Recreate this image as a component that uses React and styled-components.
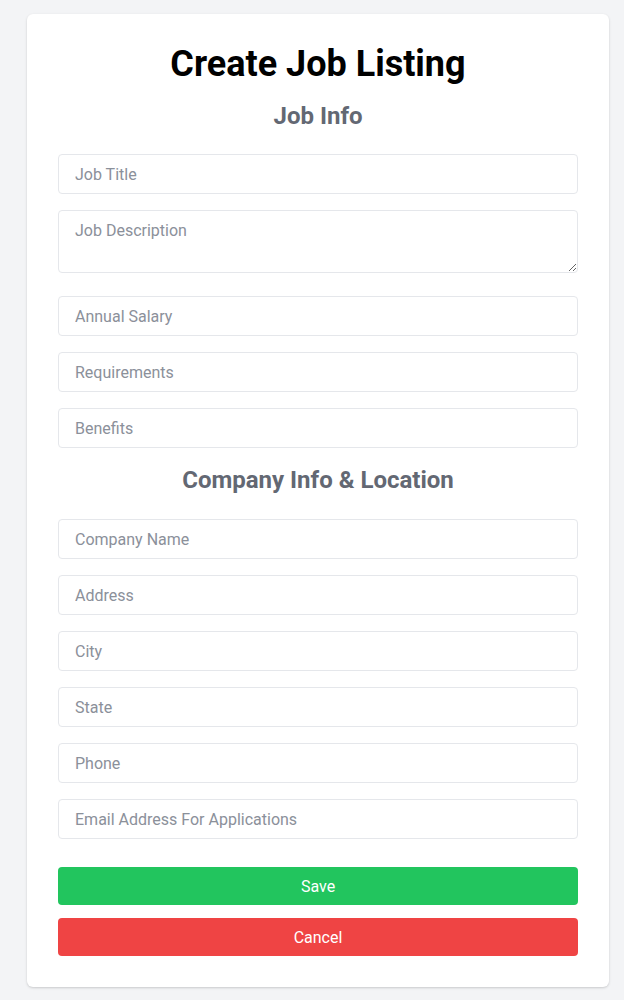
import React from 'react';
import styled, { createGlobalStyle } from 'styled-components';

const GlobalStyle = createGlobalStyle`
  body {
    margin: 0;
    background: #f3f4f6;
    font-family: Roboto, "Liberation Sans", sans-serif;
  }
`;

const jobFields = [
  { name: 'title', placeholder: 'Job Title' },
  { name: 'description', placeholder: 'Job Description', multiline: true },
  { name: 'salary', placeholder: 'Annual Salary' },
  { name: 'requirements', placeholder: 'Requirements' },
  { name: 'benefits', placeholder: 'Benefits' },
];

const companyFields = [
  { name: 'company', placeholder: 'Company Name' },
  { name: 'address', placeholder: 'Address' },
  { name: 'city', placeholder: 'City' },
  { name: 'state', placeholder: 'State' },
  { name: 'phone', placeholder: 'Phone' },
  { name: 'email', placeholder: 'Email Address For Applications' },
];

const renderField = (f) =>
  f.multiline ? (
    <TextArea key={f.name} name={f.name} placeholder={f.placeholder} />
  ) : (
    <Input key={f.name} name={f.name} type="text" placeholder={f.placeholder} />
  );

export default function App() {
  return (
    <Page>
      <GlobalStyle />
      <Card>
        <Title>Create Job Listing</Title>
        <Form onSubmit={(e) => e.preventDefault()}>
          <Section>Job Info</Section>
          {jobFields.map(renderField)}
          <Section $gap={7}>Company Info &amp; Location</Section>
          {companyFields.map(renderField)}
          <Actions>
            <Button type="submit" $color="#22c55e">Save</Button>
            <Button type="button" $color="#ef4444">Cancel</Button>
          </Actions>
        </Form>
      </Card>
    </Page>
  );
}

const Page = styled.div`
  padding: 14px 15px 13px 27px;
`;

const Card = styled.div`
  width: 582px;
  box-sizing: border-box;
  background: #fff;
  border-radius: 6px;
  box-shadow: 0 1px 3px rgba(0, 0, 0, 0.12), 0 1px 2px rgba(0, 0, 0, 0.06);
  padding: 30px 31px 31px;
`;

const Title = styled.h1`
  margin: 0;
  font-size: 36px;
  line-height: 40px;
  font-weight: 700;
  color: #000;
  text-align: center;
`;

const Form = styled.form`
  display: flex;
  flex-direction: column;
  gap: 16px;
  margin-top: 16px;
`;

const Section = styled.h2`
  margin: 0 0 ${(p) => p.$gap ?? 6}px;
  font-size: 24px;
  line-height: 32px;
  font-weight: 700;
  color: #636873;
  text-align: center;
`;

const fieldStyles = `
  box-sizing: border-box;
  width: 100%;
  border: 1px solid #e5e7eb;
  border-radius: 4px;
  padding: 0 16px;
  font-family: Roboto, "Liberation Sans", sans-serif;
  font-size: 16px;
  color: #111827;
  background: #fff;
  outline: none;
  &::placeholder {
    color: #8b909a;
  }
`;

const Input = styled.input`
  ${fieldStyles}
  height: 40px;
`;

const TextArea = styled.textarea`
  ${fieldStyles}
  height: 63px;
  padding-top: 10px;
  margin-bottom: 7px;
  line-height: 20px;
  resize: vertical;
`;

const Actions = styled.div`
  display: flex;
  flex-direction: column;
  gap: 13px;
  margin-top: 12px;
`;

const Button = styled.button`
  height: 38px;
  width: 100%;
  border: none;
  border-radius: 4px;
  background: ${(p) => p.$color};
  color: #fff;
  font-family: Roboto, "Liberation Sans", sans-serif;
  font-size: 16px;
  cursor: pointer;
`;
